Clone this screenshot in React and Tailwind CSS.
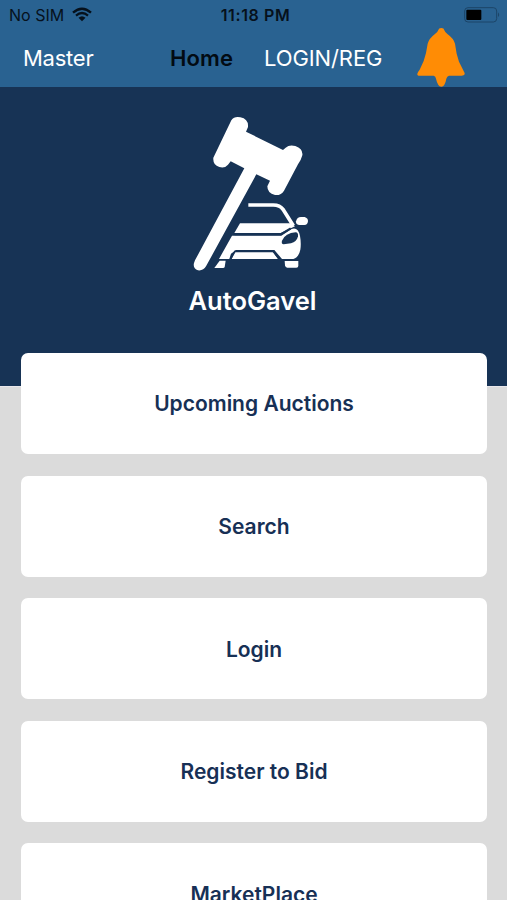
function WifiIcon() {
  return (
    <svg className="h-[15px] w-5" viewBox="0 0 60 45" fill="none">
      <path d="M3 17Q30-7 57 17" stroke="#06111c" strokeWidth="7" />
      <path d="M12 26Q30 10 48 26" stroke="#06111c" strokeWidth="6.5" />
      <path d="M19.500 32.500Q30 23.500 40.500 32.500L30 43Z" fill="#06111c" />
    </svg>
  );
}

function BatteryIcon() {
  return (
    <svg className="h-4 w-9" viewBox="0 0 108 48">
      <rect x="2" y="2" width="96" height="43" rx="10" fill="none" stroke="#1c4568" strokeWidth="3" />
      <rect x="7" y="8" width="45" height="31" rx="3" fill="#000" />
      <path d="M102 16Q109 23 102 30Z" fill="#1c4568" />
    </svg>
  );
}

function BellIcon() {
  return (
    <svg className="mb-[2px] h-[60px] w-[50px]" viewBox="0 0 150 180" fill="#ff8c05">
      <path d="M67 9Q68 3 76 3Q84 3 85 10Q87 16 95 22Q112 34 117 50L122 80L129 104L141 128Q147 138 146 142Q144 146 137 146H99Q93 148 91 155Q87 178 76 179Q65 178 60 155Q59 148 53 146H11Q3 146 4 140Q6 134 11 128L23 102L30 78L35 50Q40 34 56 22Q65 16 67 9Z" />
    </svg>
  );
}

function GavelCarLogo() {
  return (
    <svg className="mr-[2px] h-[170px] w-[145px]" viewBox="0 0 435 510" fill="#fff">
      <path d="M154 46Q163 33 181 37Q206 42 204 66L198 80L309 135L317 128Q328 118 346 123Q370 132 367 151Q364 164 354 178L312 257Q303 272 285 270Q262 265 262 244L270 227L229 208L78 484Q70 498 54 496Q38 491 42 474L45 466L193 190L152 169L144 179Q134 191 118 186Q98 180 100 158Z" />
      <path d="M205 300H280Q300 300 309 313L340 362" fill="none" stroke="#fff" strokeWidth="11" />
      <path d="M180 355H334L345 364L302 384H163Z" />
      <path d="M156 392H304L335 372Q354 365 360 393Q364 414 361 434Q356 458 340 462H306L283 435H168L153 446L148 462H117Z" />
      <path d="M164 441H278L294 462H155Z" />
      <path d="M119 467H137L134 486Q133 489 129 489H103Z" />
      <path d="M314 468H355V482Q355 488 349 488H322Q316 488 315 481Z" />
      <path d="M306 407Q316 384 347 382Q355 382 354 394Q350 411 333 415L311 418Q303 417 306 407Z" fill="#173355" />
      <path d="M164 388H302L332 370" fill="none" stroke="#173355" strokeWidth="6" />
      <path d="M151 463L165 439H281L298 463" fill="none" stroke="#173355" strokeWidth="5" />
      <path d="M348 349Q351 336 363 336H374Q384 339 384 348Q383 360 373 360H357Q347 359 348 349Z" />
    </svg>
  );
}

const actions = ["Upcoming Auctions", "Search", "Login", "Register to Bid", "MarketPlace"];

export default function App() {
  return (
    <div className="h-[900px] w-full overflow-hidden bg-[#dbdbdb] font-[Inter,sans-serif]">
      <header className="h-[87px] bg-[#296291] text-[#06111c]">
        <div className="grid h-[29px] grid-cols-3 items-center pl-[9px] pr-[7px] text-[16px]">
          <div className="flex items-center gap-[8px]">
            <span>No SIM</span>
            <WifiIcon />
          </div>
          <span className="whitespace-nowrap pl-[2px] text-center font-semibold tracking-[0.600px]">11:18 PM</span>
          <div className="flex justify-end"><BatteryIcon /></div>
        </div>
        <nav className="flex h-[58px] items-center text-[22px] whitespace-nowrap">
          <span className="ml-[23px] w-[147px] tracking-[-0.250px] text-white">Master</span>
          <span className="w-[94px] font-semibold tracking-[0.100px] text-[#020b13]">Home</span>
          <span className="w-[152px] tracking-[-0.100px] text-white">LOGIN/REG</span>
          <BellIcon />
        </nav>
      </header>
      <section className="flex h-[300px] flex-col items-center border-b border-[#e8e7eb] bg-[#173355] pt-[18px]">
        <GavelCarLogo />
        <h1 className="mt-[9px] mr-[2px] text-[25.500px] leading-[34px] font-semibold text-white">AutoGavel</h1>
      </section>
      <main className="-mt-[34px] flex flex-col gap-[21.400px] px-[21px] pr-5">
        {actions.map((label) => (
          <button key={label} className="flex h-[101.200px] shrink-0 items-center justify-center rounded-[7px] bg-white pt-px text-[21px] font-semibold text-[#173055]">
            {label}
          </button>
        ))}
      </main>
    </div>
  );
}
